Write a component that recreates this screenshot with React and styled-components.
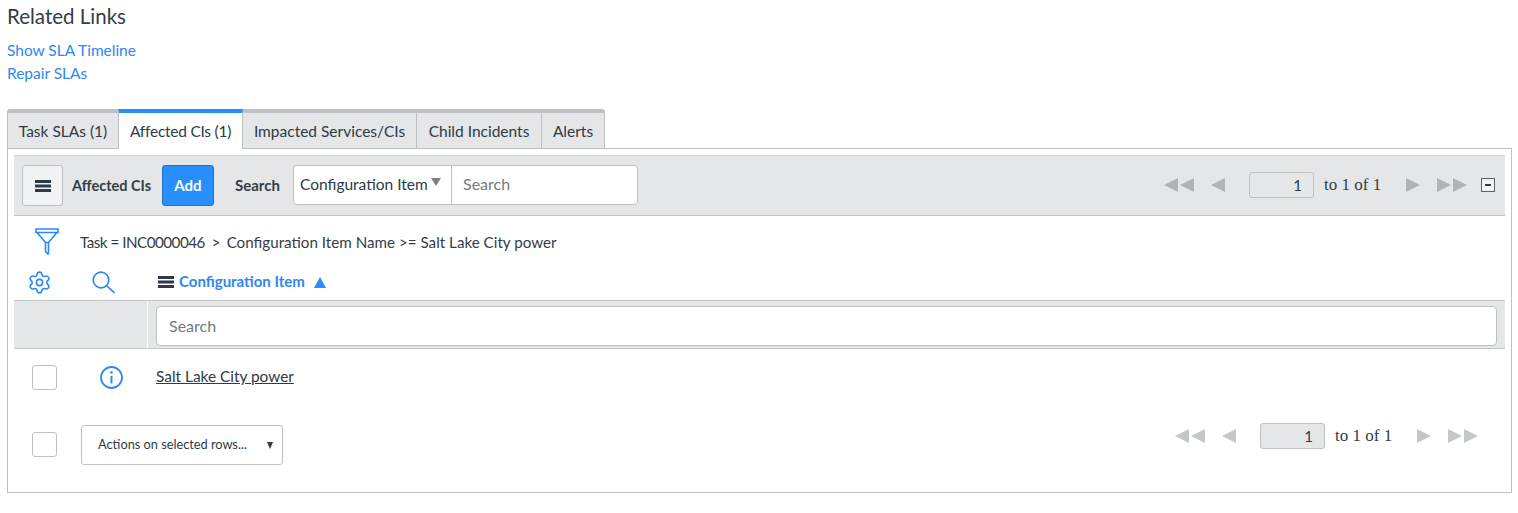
import styled, { createGlobalStyle } from 'styled-components';
import { Settings } from 'lucide-react';

const GlobalStyle = createGlobalStyle`
	html, body {
		margin: 0;
		padding: 0;
		background: #fff;
		font-family: 'Lato', 'Liberation Sans', sans-serif;
		font-size: 15.5px;
		color: #2e3a46;
	}
	* {
		box-sizing: border-box;
	}
`;

const Page = styled.div`
	padding: 0 6px 0 7px;
	height: 513px;
	overflow: hidden;
`;

const Heading = styled.h2`
	margin: 0;
	padding-top: 4px;
	height: 39px;
	font-size: 20.5px;
	line-height: 25px;
	font-weight: 400;
	color: #343d47;
`;

const LinkList = styled.div`
	display: flex;
	flex-direction: column;
	height: 70px;
	padding-bottom: 1px;
`;

const RelatedLink = styled.a`
	height: 23px;
	line-height: 23px;
	color: #2f86f5;
	font-size: 15.5px;
	letter-spacing: -0.02px;
`;

const TabBar = styled.div`
	display: flex;
	width: 598px;
	height: 40px;
	position: relative;
	z-index: 1;
	margin-bottom: -1px;
`;

const Tab = styled.div`
	width: ${(p) => p.$width}px;
	height: 40px;
	display: flex;
	align-items: center;
	justify-content: center;
	font-size: 15.5px;
	letter-spacing: ${(p) => (p.$active ? '-0.25px' : '0')};
	background: ${(p) => (p.$active ? '#fff' : '#e4e6e7')};
	border-top: 4px solid ${(p) => (p.$active ? '#278efc' : '#bdc0c4')};
	border-right: ${(p) => (p.$first ? 'none' : '1px solid #bdc0c4')};
	border-left: ${(p) => (p.$first || p.$active ? '1px solid #bdc0c4' : 'none')};
	border-bottom: ${(p) => (p.$active ? 'none' : '1px solid #bdc0c4')};
	border-top-left-radius: ${(p) => (p.$first ? '3px' : '0')};
	border-top-right-radius: ${(p) => (p.$last ? '3px' : '0')};
`;

const Panel = styled.div`
	height: 345px;
	border: 1px solid #bdc0c4;
	padding: 6px 6px 0 6px;
`;

const Toolbar = styled.div`
	height: 61px;
	background: #e4e6e7;
	border-top: 1px solid #d1d3d6;
	border-bottom: 1px solid #c4c7ca;
	display: flex;
	align-items: center;
	padding: 0 10px 0 8px;
`;

const MenuButton = styled.button`
	width: 41px;
	height: 41px;
	padding: 0;
	display: flex;
	align-items: center;
	justify-content: center;
	background: #f1f2f3;
	border: 1px solid #bdc0c4;
	border-radius: 3px;
`;

const ListTitle = styled.span`
	margin-left: 9px;
	width: 90px;
	font-weight: 700;
	font-size: 14.5px;
	color: #343d47;
`;

const AddButton = styled.button`
	width: 52px;
	height: 41px;
	padding: 0 0 2px;
	background: #278efc;
	border: 1px solid #1f72c9;
	border-radius: 3px;
	color: #fff;
	font: 700 15px 'Lato', sans-serif;
`;

const SearchLabel = styled.span`
	margin-left: 21px;
	padding-bottom: 2px;
	width: 58px;
	font-weight: 700;
	font-size: 15px;
	color: #343d47;
`;

const SearchGroup = styled.div`
	width: 345px;
	height: 40px;
	margin-top: -2px;
	display: flex;
	background: #fff;
	border: 1px solid #bdc0c4;
	border-radius: 4px;
`;

const FieldSelect = styled.div`
	width: 158px;
	display: flex;
	align-items: center;
	padding: 0 0 2px 6px;
	font-size: 15.5px;
	border-right: 1px solid #bdc0c4;
	white-space: nowrap;
`;

const SelectCaret = styled.span`
	margin: -4px 0 0 3px;
	width: 0;
	height: 0;
	border-left: 5px solid transparent;
	border-right: 5px solid transparent;
	border-top: 8px solid #7b8086;
`;

const SearchText = styled.span`
	padding: 0 0 2px 11px;
	align-self: center;
	color: #737a81;
	font-size: 16px;
`;

const Pager = styled.div`
	margin-left: auto;
	margin-top: -1px;
	display: flex;
	align-items: center;
`;

const Arrow = styled.svg`
	display: block;
	height: 14px;
	flex: none;
	margin-left: ${(p) => p.$gap || 0}px;
	fill: ${(p) => (p.$light ? '#c4c7ca' : '#b0b4b8')};
`;

const PageInput = styled.div`
	width: 65px;
	height: 26px;
	margin-left: 24px;
	padding: 0 11px 1px 0;
	display: flex;
	align-items: center;
	justify-content: flex-end;
	border: 1px solid #bdc0c4;
	border-radius: 3px;
	background: #e4e6e7;
	font-size: 15px;
`;

const PageText = styled.span`
	margin-left: 10px;
	width: 57px;
	font-family: 'Liberation Serif', serif;
	font-size: 17px;
	color: #343d47;
	white-space: nowrap;
`;

const CollapseBox = styled.div`
	width: 14px;
	height: 14px;
	margin-left: 14px;
	display: flex;
	align-items: center;
	justify-content: center;
	border: 1px solid #5d6268;
	background: #f1f2f3;
	&::after {
		content: '';
		width: 6px;
		height: 2px;
		background: #343d47;
	}
`;

const FilterRow = styled.div`
	height: 52px;
	display: flex;
	align-items: center;
	padding: 0 0 2px 21px;
	font-size: 15.2px;
`;

const FilterText = styled.span`
	margin: 1px 0 0 21px;
	color: #343d47;
	white-space: pre;
`;

const FilterValue = styled.span`
	letter-spacing: -0.5px;
`;

const FilterSeparator = styled.span`
	margin: 0 6px 0 7px;
`;

const HeaderRow = styled.div`
	height: 32px;
	padding-bottom: 4px;
	display: grid;
	grid-template-columns: 144px 1fr;
	align-items: center;
`;

const IconCell = styled.div`
	display: flex;
	align-items: center;
	gap: 40px;
	padding-left: 13px;
`;

const ColumnHead = styled.div`
	display: flex;
	align-items: center;
	color: #2f86f5;
	font-weight: 700;
	font-size: 15px;
`;

const ColumnName = styled.span`
	margin: 0 0 2px 5px;
`;

const HeadTriangle = styled.span`
	margin-left: 9px;
	width: 0;
	height: 0;
	border-left: 6.5px solid transparent;
	border-right: 6.5px solid transparent;
	border-bottom: 11px solid #278efc;
`;

const SearchRow = styled.div`
	height: 49px;
	display: grid;
	grid-template-columns: 133px 1fr;
	column-gap: 1px;
	background: #fff;
	border-top: 1px solid #c4c7ca;
	border-bottom: 1px solid #c4c7ca;
`;

const SearchCell = styled.div`
	background: #e4e6e7;
	padding: 5px 8px 0 8px;
`;

const ColumnSearch = styled.div`
	height: 40px;
	display: flex;
	align-items: center;
	padding: 0 0 2px 12px;
	background: #fff;
	border: 1px solid #bdc0c4;
	border-radius: 4px;
	color: #737a81;
	font-size: 16px;
`;

const DataRow = styled.div`
	height: 56px;
	display: grid;
	grid-template-columns: 142px 1fr;
	align-items: center;
`;

const RowLead = styled.div`
	display: flex;
	align-items: center;
	padding-left: 18px;
	gap: 43px;
`;

const Check = styled.span`
	display: block;
	flex: none;
	width: 25px;
	height: 25px;
	background: #fff;
	border: 1px solid #bdc0c4;
	border-radius: 3px;
`;

const RecordLink = styled.a`
	margin-bottom: 2px;
	color: #2e3a46;
	font-size: 15.4px;
	text-decoration: underline;
`;

const Footer = styled.div`
	display: flex;
	align-items: flex-start;
	padding: 20px 27px 0 18px;
`;

const FooterCheck = styled(Check)`
	margin-top: 7px;
`;

const ActionSelect = styled.div`
	width: 202px;
	height: 40px;
	margin-left: 24px;
	padding: 0 9px 3px 16px;
	display: flex;
	align-items: center;
	justify-content: space-between;
	border: 1px solid #bdc0c4;
	border-radius: 3px;
	font-size: 12.75px;
	white-space: nowrap;
`;

const ActionCaret = styled.span`
	margin-top: 3px;
	width: 0;
	height: 0;
	border-left: 3.5px solid transparent;
	border-right: 3.5px solid transparent;
	border-top: 7px solid #343d47;
`;

const FooterPager = styled(Pager)`
	margin-top: -2px;
	height: 26px;
`;

function Bars() {
	return (
		<svg width="16" height="12" viewBox="0 0 16 12" fill="#2e3a46">
			<rect y="0" width="16" height="3" />
			<rect y="4.500" width="16" height="3" />
			<rect y="9" width="16" height="3" />
		</svg>
	);
}

function Arrows({ light }) {
	return (
		<>
			<Arrow $light={light} width="30" viewBox="0 0 30 14">
				<path d="M0 7 14 0v14zM16 7 30 0v14z" />
			</Arrow>
			<Arrow $light={light} $gap={17} width="14" viewBox="0 0 14 14">
				<path d="M0 7 14 0v14z" />
			</Arrow>
		</>
	);
}

function ArrowsNext({ light }) {
	return (
		<>
			<Arrow $light={light} $gap={25} width="14" viewBox="0 0 14 14">
				<path d="M14 7 0 0v14z" />
			</Arrow>
			<Arrow $light={light} $gap={17} width="30" viewBox="0 0 30 14">
				<path d="M14 7 0 0v14zM30 7 16 0v14z" />
			</Arrow>
		</>
	);
}

export default function App() {
	return (
		<Page>
			<GlobalStyle />
			<Heading>Related Links</Heading>
			<LinkList>
				<RelatedLink>Show SLA Timeline</RelatedLink>
				<RelatedLink>Repair SLAs</RelatedLink>
			</LinkList>
			<TabBar>
				<Tab $first $width={111}>Task SLAs (1)</Tab>
				<Tab $active $width={125}>Affected CIs (1)</Tab>
				<Tab $width={174}>Impacted Services/CIs</Tab>
				<Tab $width={125}>Child Incidents</Tab>
				<Tab $last $width={63}>Alerts</Tab>
			</TabBar>
			<Panel>
				<Toolbar>
					<MenuButton>
						<Bars />
					</MenuButton>
					<ListTitle>Affected CIs</ListTitle>
					<AddButton>Add</AddButton>
					<SearchLabel>Search</SearchLabel>
					<SearchGroup>
						<FieldSelect>
							Configuration Item
							<SelectCaret />
						</FieldSelect>
						<SearchText>Search</SearchText>
					</SearchGroup>
					<Pager>
						<Arrows />
						<PageInput>1</PageInput>
						<PageText>to 1 of 1</PageText>
						<ArrowsNext />
						<CollapseBox />
					</Pager>
				</Toolbar>
				<FilterRow>
					<svg width="24" height="27" viewBox="0 0 24 27" fill="none" stroke="#2f86f5" strokeWidth="1.6">
						<path d="M1 1h22v3.500H1zM2 4.500l8.500 10h3l8.500-10M10.500 14.500v9l2.500 2.500 .5-2.500v-9" />
					</svg>
					<FilterText>
						<FilterValue>Task = INC0000046</FilterValue>
						<FilterSeparator>&gt;</FilterSeparator>
						Configuration Item Name &gt;= Salt Lake City power
					</FilterText>
				</FilterRow>
				<HeaderRow>
					<IconCell>
						<Settings size={25} color="#2f86f5" strokeWidth={1.5} />
						<svg width="23" height="23" viewBox="0 0 23 23" fill="none" stroke="#2f86f5" strokeWidth="1.7">
							<circle cx="9" cy="9" r="7.800" />
							<path d="M14.500 14.500 22.500 22" />
						</svg>
					</IconCell>
					<ColumnHead>
						<Bars />
						<ColumnName>Configuration Item</ColumnName>
						<HeadTriangle />
					</ColumnHead>
				</HeaderRow>
				<SearchRow>
					<SearchCell />
					<SearchCell>
						<ColumnSearch>Search</ColumnSearch>
					</SearchCell>
				</SearchRow>
				<DataRow>
					<RowLead>
						<Check />
						<svg width="23" height="23" viewBox="0 0 23 23" fill="none" stroke="#2f86f5" strokeWidth="1.8">
							<circle cx="11.500" cy="11.500" r="10.500" />
							<path d="M11.500 10v7.500" strokeWidth="2" />
							<circle cx="11.500" cy="6.500" r="1.300" fill="#2f86f5" stroke="none" />
						</svg>
					</RowLead>
					<RecordLink>Salt Lake City power</RecordLink>
				</DataRow>
				<Footer>
					<FooterCheck />
					<ActionSelect>
						Actions on selected rows...
						<ActionCaret />
					</ActionSelect>
					<FooterPager>
						<Arrows light />
						<PageInput>1</PageInput>
						<PageText>to 1 of 1</PageText>
						<ArrowsNext light />
					</FooterPager>
				</Footer>
			</Panel>
		</Page>
	);
}
